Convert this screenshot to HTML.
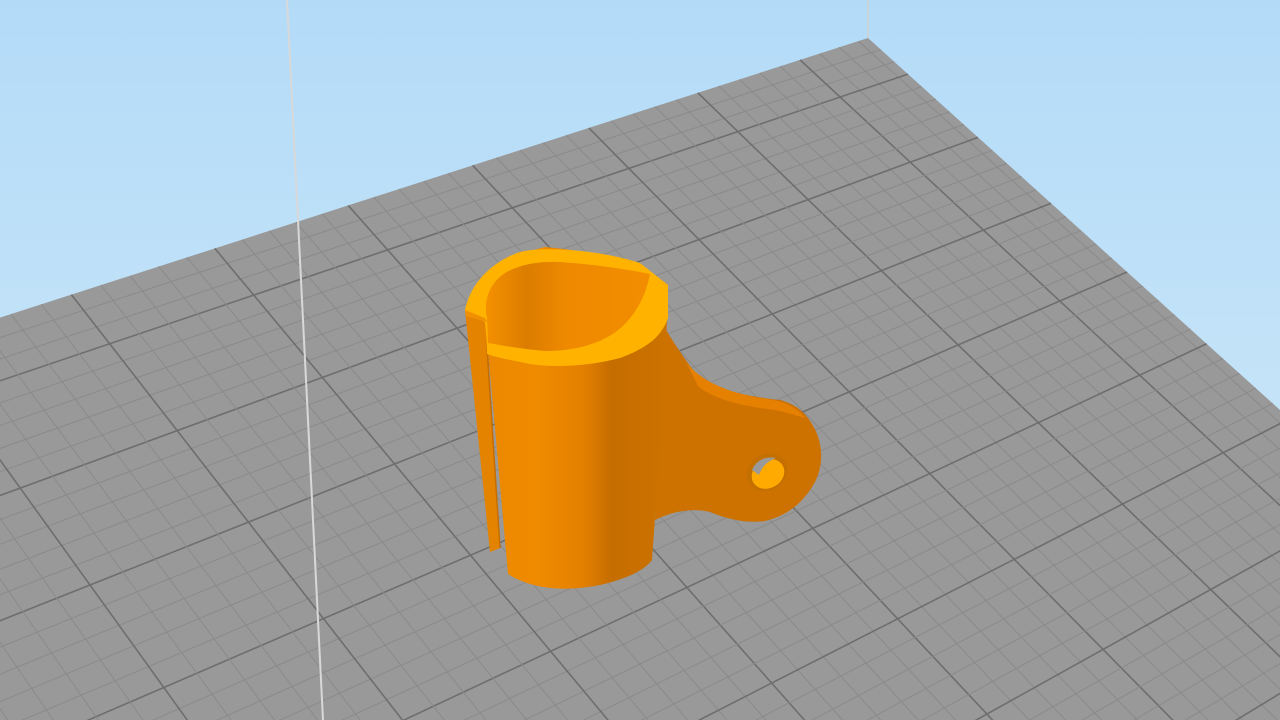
<!DOCTYPE html>
<html><head><meta charset="utf-8"><style>
html,body{margin:0;padding:0;width:1280px;height:720px;overflow:hidden;background:#c4e3f8}
svg{display:block;overflow:hidden}
</style></head><body>
<svg id="s" width="1280" height="720" viewBox="0 0 1280 720" xmlns="http://www.w3.org/2000/svg">
<defs>
<clipPath id="cl"><rect width="1280" height="720"/></clipPath>
<linearGradient id="sky" x1="0" y1="0" x2="0" y2="1">
<stop offset="0" stop-color="#b3dbf8"/><stop offset="1" stop-color="#d2eaf8"/>
</linearGradient>
<linearGradient id="body" x1="0" y1="0" x2="1" y2="0">
<stop offset="0" stop-color="#ea8700"/><stop offset="0.35" stop-color="#f08b00"/>
<stop offset="0.58" stop-color="#e38000"/><stop offset="0.72" stop-color="#c66d00"/>
<stop offset="1" stop-color="#cc7200"/>
</linearGradient>
<linearGradient id="inner" x1="0" y1="0" x2="1" y2="0">
<stop offset="0" stop-color="#f59000"/><stop offset="0.25" stop-color="#dc7d00"/>
<stop offset="0.5" stop-color="#ef8a00"/><stop offset="1" stop-color="#f28c00"/>
</linearGradient>
</defs>
<g clip-path="url(#cl)">
<rect width="1280" height="720" fill="url(#sky)"/>
<g id="plate"></g>
<line x1="287" y1="0" x2="323" y2="720" stroke="#d8d8d8" stroke-width="2"/>
<line x1="868" y1="0" x2="868" y2="38" stroke="#d0d0d0" stroke-width="1.5"/>
<!-- tab -->
<path d="M660 320 C672 340 688 365 700 378 C720 392 760 398 780 400 C795 404 805 412 812 424 C822 440 825 462 815 482 C805 500 790 515 765 521 C745 524 725 518 710 512 C695 508 675 510 655 520 Z" fill="#cd7200"/>
<path d="M686 362 C700 380 725 392 760 398 C780 400 795 405 805 418 C795 415 780 410 760 408 C735 404 712 398 698 386 Z" fill="#e58000"/>
<ellipse cx="767" cy="472" rx="21" ry="18" transform="rotate(-30 767 472)" fill="#c47000"/>
<ellipse cx="768" cy="474" rx="17" ry="14" transform="rotate(-30 768 474)" fill="#ffaa00"/>
<path d="M752 470 C756 460 766 456 776 458 C768 461 762 466 759 475 Z" fill="#9a9a9a"/>
<!-- body -->
<path d="M465 310 L487 320 L488 350 L508 574 C530 588 560 592 595 586 C625 580 645 570 652 560 L662 420 L668 300 L668 285 C640 263 600 252 545 247 C510 255 480 275 465 310 Z" fill="url(#body)"/>
<!-- slit left panel -->
<path d="M465 310 L487 320 L488 350 L500 548 L490 552 Z" fill="#e48300"/>
<line x1="487" y1="348" x2="500" y2="548" stroke="#c56d00" stroke-width="1.5"/>
<!-- rim -->
<path d="M465 310 C470 285 490 262 520 252 C545 246 600 250 640 263 L668 285 L668 318 C662 335 650 347 620 358 C590 366 555 368 530 364 C510 360 495 357 487 354 L487 344 L485 322 L465 312 Z" fill="#ffb300"/>
<path d="M487 318 C483 300 490 283 505 273 C520 264 540 261 560 262 C590 264 620 268 650 274 C646 295 636 316 617 331 C597 346 570 351 545 351 C520 349 500 345 488 343 Z" fill="url(#inner)"/>
<path d="M465 310 L485 318 L487 322 L466 316 Z" fill="#f09000"/>
</g>
</svg>
<script>
(function(){
var O=[868,38],E1=[67,60.5],E2=[-95,30.6],a=-0.02,b=-0.03;
function P(u,v){var s=1+a*u+b*v;return[O[0]+(u*E1[0]+v*E2[0])/s,O[1]+(u*E1[1]+v*E2[1])/s];}
var g=document.getElementById('plate'),ns='http://www.w3.org/2000/svg';
var U=11.5,V=11.5;
var c=[P(0,0),P(U,0),P(U,V),P(0,V)];
var poly=document.createElementNS(ns,'polygon');
poly.setAttribute('points',c.map(function(p){return p[0].toFixed(1)+','+p[1].toFixed(1)}).join(' '));
poly.setAttribute('fill','#999999');
g.appendChild(poly);
function ln(p,q,col,w){var l=document.createElementNS(ns,'line');l.setAttribute('x1',p[0]);l.setAttribute('y1',p[1]);l.setAttribute('x2',q[0]);l.setAttribute('y2',q[1]);l.setAttribute('stroke',col);l.setAttribute('stroke-width',w);g.appendChild(l);}
var u0=0.59,v0=0.7;
for(var k=-5;k<70;k++){
 var u=u0+k/5;if(u>0&&u<U){var maj=(k%5===0);ln(P(u,0),P(u,V),maj?'#6e6e6e':'#8a8a8a',maj?1.6:1);}
 var v=v0+k/5;if(v>0&&v<V){var maj2=(k%5===0);ln(P(0,v),P(U,v),maj2?'#6e6e6e':'#8a8a8a',maj2?1.6:1);}
}
})();
</script>
</body></html>
